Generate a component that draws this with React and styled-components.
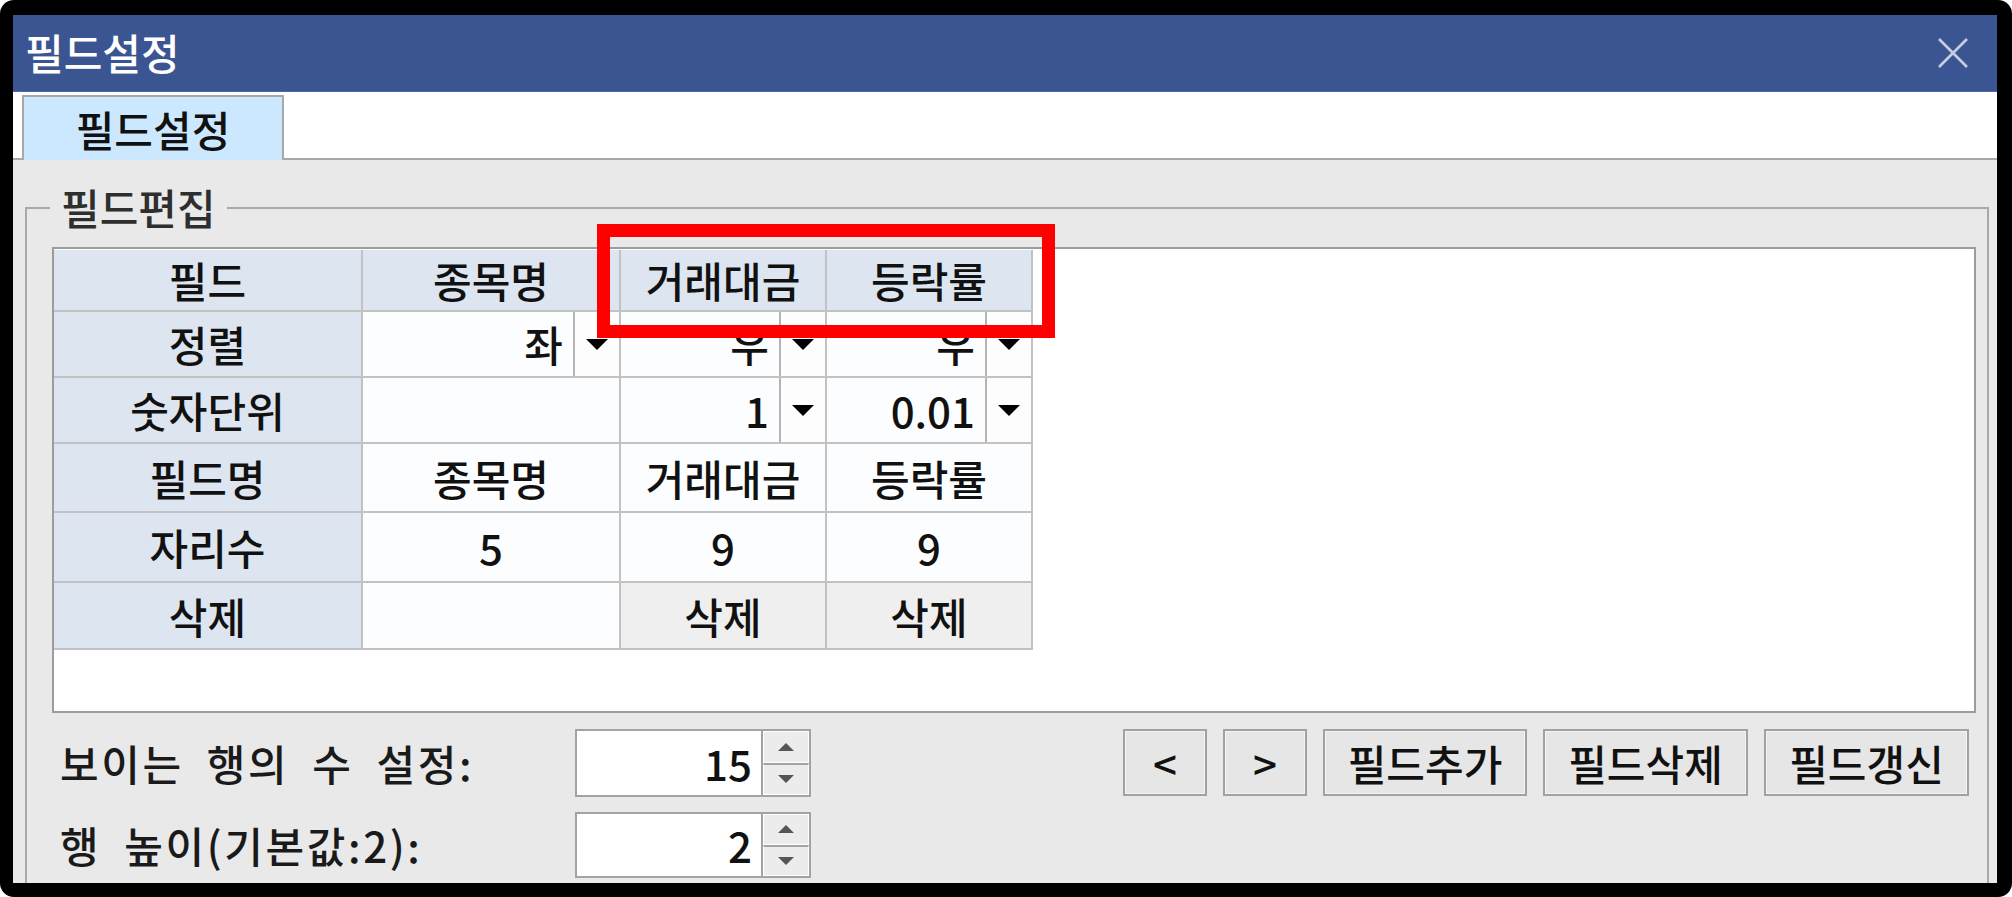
import React from "react";
import styled, { createGlobalStyle } from "styled-components";

const GlobalStyle = createGlobalStyle`
  html, body { margin: 0; padding: 0; background: #ffffff; }
  body {
    width: 2012px; height: 897px; overflow: hidden;
    font-family: "Noto Sans CJK KR", "Noto Sans", "DejaVu Sans", sans-serif;
    font-weight: 500;
  }
  * { box-sizing: border-box; }
`;

const Frame = styled.div`
  position: relative;
  width: 2012px;
  height: 897px;
  background: #000;
  border-radius: 14px;
  padding: 15px 15px 14px 13px;
`;

const Window = styled.div`
  width: 100%;
  height: 100%;
  display: flex;
  flex-direction: column;
  background: #e9e9e9;
  overflow: hidden;
`;

const TitleBar = styled.div`
  height: 77px;
  flex: none;
  display: flex;
  align-items: center;
  justify-content: space-between;
  padding: 0 28px 0 12px;
  background: #3b5592;
  border-bottom: 1px solid #4d68a6;
`;

const TitleText = styled.span`
  color: #ffffff;
  font-size: 42px;
  line-height: 1;
  margin-top: -2px;
`;

const TabStrip = styled.div`
  height: 68px;
  flex: none;
  display: flex;
  align-items: flex-end;
  padding-left: 9px;
  background: #ffffff;
  border-bottom: 2px solid #a8a8a8;
`;

const Tab = styled.div`
  width: 262px;
  height: 65px;
  margin-bottom: -2px;
  display: flex;
  align-items: center;
  justify-content: center;
  background: #cce8ff;
  border: 2px solid #a8a8a8;
  border-bottom: none;
  font-size: 42px;
  line-height: 1;
  color: #111;
`;

const Body = styled.div`
  flex: 1;
  display: flex;
  flex-direction: column;
  padding: 47px 8px 0 12px;
`;

const GroupBox = styled.div`
  position: relative;
  flex: 1;
  border: 2px solid #a9a9a9;
  border-bottom: none;
  padding: 38px 11px 0 25px;
  display: flex;
  flex-direction: column;
`;

const GroupLabel = styled.span`
  position: absolute;
  left: 23px;
  top: -24px;
  padding: 0 11px;
  background: #e9e9e9;
  color: #2e2e2e;
  font-size: 42px;
  line-height: 44px;
`;

const GridArea = styled.div`
  height: 466px;
  flex: none;
  background: #ffffff;
  border: 2px solid #9c9c9c;
  padding-top: 1px;
`;

const Grid = styled.div`
  display: grid;
  grid-template-columns: 309px 258px 206px 206px;
  grid-template-rows: 62px 66px 66px 69px 70px 67px;
  width: max-content;
`;

const Cell = styled.div`
  display: flex;
  align-items: center;
  justify-content: center;
  border-right: 2px solid #c2c2c2;
  border-bottom: 2px solid #c2c2c2;
  background: ${(p) =>
    p.$kind === "head" ? "#dde5f0" : p.$kind === "button" ? "#efefef" : "#fcfdff"};
  font-size: 42px;
  line-height: 1;
  color: #111;
  white-space: nowrap;
`;

const ComboValue = styled.span`
  flex: 1;
  text-align: right;
  padding-right: 10px;
`;

const DropButton = styled.div`
  width: 46px;
  align-self: stretch;
  display: flex;
  align-items: center;
  justify-content: center;
  background: #fdfdfd;
  border-left: 2px solid #b4b4b4;
`;

const DownTriangle = styled.span`
  width: 0;
  height: 0;
  border-left: 11px solid transparent;
  border-right: 11px solid transparent;
  border-top: 11px solid #000;
`;

const Controls = styled.div`
  display: flex;
  justify-content: space-between;
  align-items: flex-start;
  margin-top: 16px;
  padding-right: 7px;
`;

const Settings = styled.div`
  display: flex;
  flex-direction: column;
  gap: 15px;
`;

const SettingRow = styled.div`
  display: flex;
  align-items: center;
  height: ${(p) => p.$h}px;
`;

const SettingLabel = styled.span`
  width: 523px;
  padding-left: 8px;
  font-size: 42px;
  line-height: 1;
  color: #1a1a1a;
  letter-spacing: 2.6px;
  word-spacing: 11px;
  white-space: nowrap;
`;

const Spinner = styled.div`
  width: 236px;
  height: 100%;
  display: flex;
  border: 2px solid #a3a3a3;
  background: #ffffff;
`;

const SpinValue = styled.div`
  flex: 1;
  display: flex;
  align-items: center;
  justify-content: flex-end;
  padding-right: 9px;
  font-size: 42px;
  line-height: 1;
  color: #111;
`;

const SpinButtons = styled.div`
  width: 48px;
  display: flex;
  flex-direction: column;
  border-left: 2px solid #a3a3a3;
`;

const SpinButton = styled.div`
  flex: 1;
  display: flex;
  align-items: center;
  justify-content: center;
  background: #ececec;
  border: 1px solid #ffffff;
  & + & { border-top: 2px solid #a3a3a3; }
`;

const SpinArrow = styled.span`
  width: 0;
  height: 0;
  border-left: 8px solid transparent;
  border-right: 8px solid transparent;
  ${(p) =>
    p.$up ? "border-bottom: 8px solid #555;" : "border-top: 8px solid #555;"}
`;

const ButtonBar = styled.div`
  display: flex;
  gap: 16px;
`;

const ActionButton = styled.div`
  width: ${(p) => p.$w}px;
  height: 67px;
  display: flex;
  align-items: center;
  justify-content: center;
  background: #e6e6e6;
  border: 2px solid #a2a2a2;
  box-shadow: inset 0 0 0 1px #f3f3f3;
  font-size: 42px;
  line-height: 1;
  color: #111;
`;

const Highlight = styled.div`
  position: absolute;
  left: 597px;
  top: 224px;
  width: 458px;
  height: 114px;
  border: 13px solid #ff0000;
  pointer-events: none;
`;

const CloseIcon = () => (
  <svg width="32" height="32" viewBox="0 0 32 32">
    <path d="M2 2 L30 30 M30 2 L2 30" stroke="#c6cee0" strokeWidth="2.6" fill="none" />
  </svg>
);

const Combo = ({ value }) => (
  <Cell>
    <ComboValue>{value}</ComboValue>
    <DropButton>
      <DownTriangle />
    </DropButton>
  </Cell>
);

const Spin = ({ value }) => (
  <Spinner>
    <SpinValue>{value}</SpinValue>
    <SpinButtons>
      <SpinButton>
        <SpinArrow $up />
      </SpinButton>
      <SpinButton>
        <SpinArrow />
      </SpinButton>
    </SpinButtons>
  </Spinner>
);

export default function App() {
  return (
    <>
      <GlobalStyle />
      <Frame>
        <Window>
          <TitleBar>
            <TitleText>필드설정</TitleText>
            <CloseIcon />
          </TitleBar>
          <TabStrip>
            <Tab>필드설정</Tab>
          </TabStrip>
          <Body>
            <GroupBox>
              <GroupLabel>필드편집</GroupLabel>
              <GridArea>
                <Grid>
                  <Cell $kind="head">필드</Cell>
                  <Cell $kind="head">종목명</Cell>
                  <Cell $kind="head">거래대금</Cell>
                  <Cell $kind="head">등락률</Cell>

                  <Cell $kind="head">정렬</Cell>
                  <Combo value="좌" />
                  <Combo value="우" />
                  <Combo value="우" />

                  <Cell $kind="head">숫자단위</Cell>
                  <Cell />
                  <Combo value="1" />
                  <Combo value="0.01" />

                  <Cell $kind="head">필드명</Cell>
                  <Cell>종목명</Cell>
                  <Cell>거래대금</Cell>
                  <Cell>등락률</Cell>

                  <Cell $kind="head">자리수</Cell>
                  <Cell>5</Cell>
                  <Cell>9</Cell>
                  <Cell>9</Cell>

                  <Cell $kind="head">삭제</Cell>
                  <Cell />
                  <Cell $kind="button">삭제</Cell>
                  <Cell $kind="button">삭제</Cell>
                </Grid>
              </GridArea>
              <Controls>
                <Settings>
                  <SettingRow $h={68}>
                    <SettingLabel>보이는 행의 수 설정:</SettingLabel>
                    <Spin value="15" />
                  </SettingRow>
                  <SettingRow $h={66}>
                    <SettingLabel>행 높이(기본값:2):</SettingLabel>
                    <Spin value="2" />
                  </SettingRow>
                </Settings>
                <ButtonBar>
                  <ActionButton $w={84}>&lt;</ActionButton>
                  <ActionButton $w={84}>&gt;</ActionButton>
                  <ActionButton $w={204}>필드추가</ActionButton>
                  <ActionButton $w={205}>필드삭제</ActionButton>
                  <ActionButton $w={205}>필드갱신</ActionButton>
                </ButtonBar>
              </Controls>
            </GroupBox>
          </Body>
        </Window>
        <Highlight />
      </Frame>
    </>
  );
}
